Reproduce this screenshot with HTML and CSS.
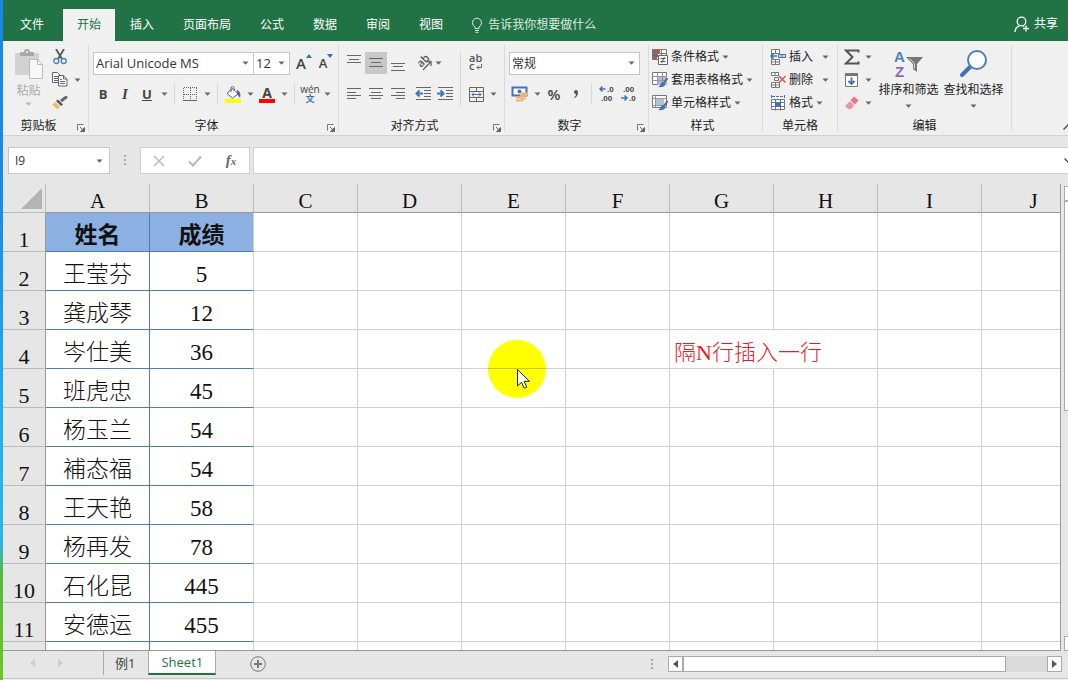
FILE: index.html
```html
<!DOCTYPE html>
<html lang="zh-CN">
<head>
<meta charset="utf-8">
<title>Sheet1</title>
<link rel="stylesheet" href="styles.css">
</head>
<body>
<svg class="defs" aria-hidden="true">
  <symbol id="caret" viewBox="0 0 7 4"><path d="M0.5 0.5h6L3.5 3.8z" fill="#666"/></symbol>
  <symbol id="launcher" viewBox="0 0 8 8"><path d="M0.5 6.5V0.5H6.5" fill="none" stroke="#777"/><path d="M3 3l3 3M7.5 3.5v4h-4z" stroke="#666" fill="#666"/></symbol>
  <symbol id="brush" viewBox="0 0 10 10"><path d="M9.5 0.5L5.8 5.8" stroke="#666" stroke-width="2"/><path d="M5.5 4.5l2 2C7 9 4 10 0 9.6 2.5 8.5 2.500 5 5.500 4.500z" fill="#3f74b5"/></symbol>
</svg>
<div class="app">
  <header class="titlebar">
    <nav class="tabs" aria-label="功能区">
      <button class="tab file">文件</button>
      <button class="tab active">开始</button>
      <button class="tab">插入</button>
      <button class="tab">页面布局</button>
      <button class="tab">公式</button>
      <button class="tab">数据</button>
      <button class="tab">审阅</button>
      <button class="tab">视图</button>
    </nav>
    <button class="tell">
      <svg width="12" height="16" viewBox="0 0 12 16" fill="none" stroke="#dcebe1"><path d="M4 11.500V10C2.500 9 1.500 7.500 1.500 5.700a4.500 4.500 0 0 1 9 0C10.500 7.500 9.500 9 8 10v1.500zM4 13.500h4M4.500 15.300h3"/></svg>
      <span>告诉我你想要做什么</span>
    </button>
    <button class="share">
      <svg width="16" height="17" viewBox="0 0 16 17" fill="none" stroke="#fff" stroke-width="1.300"><circle cx="7.500" cy="5.500" r="4.300"/><path d="M1 16c0-3.500 1.600-5.300 4.500-6.200M9 9.800l1.300.6M12 9.500v6M9 12.500h6"/></svg>
      <span>共享</span>
    </button>
  </header>

  <section class="ribbon" aria-label="开始">
    <div class="group clipboard">
      <div class="body">
        <button class="paste">
          <svg width="28" height="32" viewBox="0 0 28 32"><path d="M0 5h24v22H0z" fill="#d2d2d2"/><path d="M5 8V4h4a3 3 0 0 1 6 0h4v4z" fill="#a8a8a8"/><circle cx="12" cy="4" r="1" fill="#f0f0f0"/><path d="M14.500 11.500h8l5 5v14h-13z" fill="#f7f7f7" stroke="#bbb"/><path d="M22.500 11.500v5h5" fill="none" stroke="#bbb"/></svg>
          <span>粘贴</span>
          <svg class="caret pale"><use href="#caret"/></svg>
        </button>
        <div class="stack">
          <div class="row"><button class="ib" aria-label="剪切"><svg width="14" height="16" viewBox="0 0 14 16" fill="none"><path d="M3 0l6 10M11 0L5 10" stroke="#555" stroke-width="1.800"/><circle cx="3.300" cy="12" r="2.500" stroke="#4d7dba" stroke-width="1.300"/><circle cx="10.700" cy="12" r="2.500" stroke="#4d7dba" stroke-width="1.300"/></svg></button></div>
          <div class="row"><button class="ib" aria-label="复制"><svg width="16" height="15" viewBox="0 0 16 15" fill="#fafafa" stroke="#666"><path d="M.5.5h5l3 3v7h-8zM2 4.500h4M2 6.500h4M2 8.500h4"/><path d="M6.500 3.500h5l3.500 3.500v7H6.500z"/><path d="M11.500 3.500V7H15M8 7.500h2M8 9.500h5M8 11.500h5" fill="none" stroke="#4d6f9c"/></svg></button><button class="ar" aria-label="复制选项"><svg class="caret"><use href="#caret"/></svg></button></div>
          <div class="row"><button class="ib" aria-label="格式刷"><svg width="16" height="14" viewBox="0 0 16 14"><path d="M15 0.500L9 5" stroke="#666" stroke-width="3"/><path d="M6 3.500l5 5-2 1.500-5-5z" fill="#555"/><path d="M3.500 6L8 10.500 5.500 13.500 0 8.800z" fill="#eebb70"/></svg></button></div>
        </div>
      </div>
      <footer><span>剪贴板</span><button aria-label="剪贴板设置"><svg width="8" height="8"><use href="#launcher"/></svg></button></footer>
    </div>

    <div class="group font">
      <div class="body tools">
        <div class="row">
          <label class="combo wide"><select aria-label="字体"><option>Arial Unicode MS</option></select><svg class="caret"><use href="#caret"/></svg></label>
          <label class="combo size"><select aria-label="字号"><option>12</option></select><svg class="caret"><use href="#caret"/></svg></label>
          <button class="ib grow" aria-label="增大字号"><b>A</b><svg width="6" height="4" viewBox="0 0 6 4"><path d="M0 4h6L3 0z" fill="#3f6ea8"/></svg></button>
          <button class="ib grow small" aria-label="减小字号"><b>A</b><svg width="6" height="4" viewBox="0 0 6 4"><path d="M0 0h6L3 4z" fill="#3f6ea8"/></svg></button>
        </div>
        <div class="row">
          <button class="ib glyph"><b>B</b></button>
          <button class="ib glyph ital"><i>I</i></button>
          <button class="ib glyph"><u>U</u></button>
          <button class="ar" aria-label="下划线选项"><svg class="caret"><use href="#caret"/></svg></button>
          <span class="sep"></span>
          <button class="ib" aria-label="边框"><svg width="15" height="15" viewBox="0 0 15 15" stroke="#666"><path d="M.5 1v13M7.500 1v13M13.500 1v13M1 .5h13M1 7.500h13" stroke-dasharray="1 1"/><path d="M0 13.500h14"/></svg></button>
          <button class="ar" aria-label="边框选项"><svg class="caret"><use href="#caret"/></svg></button>
          <span class="sep"></span>
          <button class="ib" aria-label="填充颜色"><svg width="16" height="17" viewBox="0 0 16 17"><path d="M0 13h16v4H0z" fill="#ff0"/><path d="M3 6l5-3.500L13 8l-5.500 4L2.500 8z" fill="#fafafa" stroke="#666"/><path d="M6 6V2a1.500 1.500 0 0 1 3 0v3" fill="none" stroke="#666"/><path d="M12 4c3 1 4 4 3 8-1-1-2-3-3-4z" fill="#44699b"/></svg></button>
          <button class="ar" aria-label="填充颜色选项"><svg class="caret"><use href="#caret"/></svg></button>
          <button class="ib fontcolor" aria-label="字体颜色"><b>A</b></button>
          <button class="ar" aria-label="字体颜色选项"><svg class="caret"><use href="#caret"/></svg></button>
          <span class="sep"></span>
          <button class="ib wen"><span>wén</span><span class="blue">文</span></button>
          <button class="ar" aria-label="拼音选项"><svg class="caret"><use href="#caret"/></svg></button>
        </div>
      </div>
      <footer><span>字体</span><button aria-label="字体设置"><svg width="8" height="8"><use href="#launcher"/></svg></button></footer>
    </div>

    <div class="group align">
      <div class="body split">
        <div class="tools">
          <div class="row">
            <button class="ib" aria-label="顶端对齐"><svg width="14" height="18" viewBox="0 0 14 18" stroke="#666"><path d="M0 1.500h14M2 5.500h10M0 8.500h14"/></svg></button>
            <button class="ib on" aria-label="垂直居中"><svg width="14" height="16" viewBox="0 0 14 16" stroke="#666"><path d="M0 3.500h14M2 7.500h10M0 11.500h14"/></svg></button>
            <button class="ib" aria-label="底端对齐"><svg width="14" height="16" viewBox="0 0 14 16" stroke="#666"><path d="M0 8.500h14M2 11.500h10M0 15.500h14"/></svg></button>
            <button class="ib gap" aria-label="方向"><svg width="20" height="20" viewBox="0 0 20 20"><text x="0" y="0" transform="translate(8 15) rotate(-45)" class="abtext">ab</text><path d="M10 17L17.500 9M13.500 8.500h4.500v4.500" stroke="#666" fill="none" stroke-width="1.300"/></svg></button>
            <button class="ar" aria-label="方向选项"><svg class="caret"><use href="#caret"/></svg></button>
          </div>
          <div class="row">
            <button class="ib" aria-label="左对齐"><svg width="14" height="12" viewBox="0 0 14 12" stroke="#666"><path d="M0 .5h14M0 4.500h9M0 7.500h14M0 10.500h9"/></svg></button>
            <button class="ib" aria-label="居中"><svg width="14" height="12" viewBox="0 0 14 12" stroke="#666"><path d="M0 .5h14M2 4.500h10M0 7.500h14M2 10.500h10"/></svg></button>
            <button class="ib" aria-label="右对齐"><svg width="14" height="12" viewBox="0 0 14 12" stroke="#666"><path d="M0 .5h14M5 4.500h9M0 7.500h14M5 10.500h9"/></svg></button>
            <button class="ib gap" aria-label="减少缩进量"><svg width="16" height="14" viewBox="0 0 16 14" stroke="#666"><path d="M1 .5h15M9 3.500h7M9 6.500h7M9 9.500h7M1 12.500h15"/><path d="M8 6.500H2M4.500 3.500l-3 3 3 3" fill="none" stroke="#3f74b5" stroke-width="2"/></svg></button>
            <button class="ib" aria-label="增加缩进量"><svg width="16" height="14" viewBox="0 0 16 14" stroke="#666"><path d="M1 .5h15M9 3.500h7M9 6.500h7M9 9.500h7M1 12.500h15"/><path d="M0 6.500h6M3.500 3.500l3 3-3 3" fill="none" stroke="#3f74b5" stroke-width="2"/></svg></button>
          </div>
        </div>
        <span class="sep tall"></span>
        <div class="tools">
          <div class="row"><button class="ib" aria-label="自动换行"><svg width="16" height="20" viewBox="0 0 16 20"><text x="1" y="9" class="abtext">ab</text><text x="1" y="17" class="abtext">c</text><path d="M13.500 11v3.500H9M11 12.500l-2 2 2 2" fill="none" stroke="#666"/></svg></button></div>
          <div class="row"><button class="ib" aria-label="合并后居中"><svg width="15" height="15" viewBox="0 0 15 15" stroke="#666" fill="none"><path d="M.5.500h14v14H.5zM.5 4.500h14M.5 10.500h14M7.500.5v4M7.500 10.500v4"/><path d="M3 7.500h9M5 5.500l-2 2 2 2M10 5.500l2 2-2 2" stroke="#44699b"/></svg></button><button class="ar" aria-label="合并选项"><svg class="caret"><use href="#caret"/></svg></button></div>
        </div>
      </div>
      <footer><span>对齐方式</span><button aria-label="对齐设置"><svg width="8" height="8"><use href="#launcher"/></svg></button></footer>
    </div>

    <div class="group number">
      <div class="body tools">
        <div class="row"><label class="combo fmt"><select aria-label="数字格式"><option>常规</option></select><svg class="caret"><use href="#caret"/></svg></label></div>
        <div class="row">
          <button class="ib" aria-label="会计数字格式"><svg width="18" height="16" viewBox="0 0 18 16"><path d="M1.500 1.500h14v8h-14z" fill="#fff" stroke="#3f74b5" stroke-width="2"/><circle cx="8.500" cy="5.500" r="2" fill="#3f74b5"/><path d="M10 7.500h7M9 9.500h7M5 11.500h6M5 14.500h7M10 12.500h5" stroke="#efb66d" stroke-width="1.800"/></svg></button>
          <button class="ar" aria-label="会计格式选项"><svg class="caret"><use href="#caret"/></svg></button>
          <button class="ib pct">%</button>
          <button class="ib" aria-label="千位分隔"><svg width="6" height="9" viewBox="0 0 6 9"><path d="M1 2a2 2 0 0 1 4 0c0 3-1 5-3.500 6L1 7.300C2.300 6.500 3 5.500 3 4 1.700 4 1 3 1 2z" fill="#555"/></svg></button>
          <span class="sep"></span>
          <button class="ib" aria-label="增加小数位数"><svg width="18" height="20" viewBox="0 0 18 20"><text x="9" y="8" class="dec">.0</text><text x="3" y="17" class="dec">.00</text><path d="M7.500 5H2M4.500 2.500L2 5 4.500 7.500" fill="none" stroke="#3f74b5" stroke-width="1.500"/></svg></button>
          <button class="ib" aria-label="减少小数位数"><svg width="18" height="20" viewBox="0 0 18 20"><text x="3" y="8" class="dec">.00</text><text x="9" y="17" class="dec">.0</text><path d="M1 14H7M4.500 11.500L7 14 4.500 16.500" fill="none" stroke="#3f74b5" stroke-width="1.500"/></svg></button>
        </div>
      </div>
      <footer><span>数字</span><button aria-label="数字设置"><svg width="8" height="8"><use href="#launcher"/></svg></button></footer>
    </div>

    <div class="group styles">
      <div class="body list">
        <button><svg width="16" height="16" viewBox="0 0 16 16"><path d="M.5.500h14v10H.5z" fill="#fff" stroke="#777"/><path d="M1 1h7v3H1zM1 8h4v3H1z" fill="#c4513e"/><path d="M1 4h5v4H1z" fill="#3f74b5"/><path d="M9.500.5v6M.5 4.500h14" stroke="#777"/><path d="M6.500 6.500h9v9h-9z" fill="#fff" stroke="#666"/><path d="M8.500 9.500h5M8.500 12.500h5M12.500 8l-3 6" stroke="#555"/></svg><span>条件格式</span><svg class="caret"><use href="#caret"/></svg></button>
        <button><svg width="16" height="16" viewBox="0 0 16 16"><path d="M.5.500h14v12H.5z" fill="#fff" stroke="#777"/><path d="M5 4h10v9H5z" fill="#a9bedb"/><path d="M.5 4.500h14M.5 8.500h14M5.500.5v12M10.500.5v12" stroke="#9a93a8"/><use href="#brush" x="6" y="5" width="10" height="11"/></svg><span>套用表格格式</span><svg class="caret"><use href="#caret"/></svg></button>
        <button><svg width="16" height="16" viewBox="0 0 16 16"><path d="M.5.500h14v12H.5z" fill="#fff" stroke="#777"/><path d="M4 4h8v6H4z" fill="#a9c4e2"/><path d="M.5 3.500h14M3.500.5v12M.5 10.500h14" stroke="#999"/><use href="#brush" x="6" y="5" width="10" height="11"/></svg><span>单元格样式</span><svg class="caret"><use href="#caret"/></svg></button>
      </div>
      <footer><span>样式</span></footer>
    </div>

    <div class="group cells">
      <div class="body list">
        <button class="spread"><svg width="16" height="16" viewBox="0 0 16 16" fill="#fff" stroke="#777"><path d="M1.500.5h8v4h-8zM5.500.5v4M1.500 10.500h8v5h-8zM5.500 10.500v5M1.500 13h8M1.500 4.500v6"/><path d="M8.500 5.500h7v3h-7zM12 5.500v3" fill="#cfe0f3" stroke="#3f6ea8"/><path d="M7 7H1M3.500 4.500L1 7l2.500 2.500" fill="none" stroke="#3f74b5" stroke-width="1.500"/></svg><span>插入</span><svg class="caret"><use href="#caret"/></svg></button>
        <button class="spread"><svg width="16" height="16" viewBox="0 0 16 16" fill="#fff" stroke="#777"><path d="M1.500.5h7v3h-7zM5 .5v3M1.500 10.500h8v5h-8zM5.500 10.500v5M1.500 13h8M4.500 5.500h4v3h-4z"/><path d="M9 4l6.500 6.500M15.500 4L9 10.500" stroke="#dc5a4a" stroke-width="1.500"/></svg><span>删除</span><svg class="caret"><use href="#caret"/></svg></button>
        <button><svg width="16" height="16" viewBox="0 0 16 16" fill="none" stroke="#777"><path d="M1.500 4.500h13v10h-13zM1.500 7.500h13M1.500 11.500h13M5.500 4.500v11M10.500 4.500v11" fill="#fff"/><path d="M5 7h6v5H5z" fill="#3f74b5" stroke="none"/><path d="M1.500 0v3M14.500 0v3M2 1.500h12" stroke="#3f74b5" stroke-dasharray="3 1"/></svg><span>格式</span><svg class="caret"><use href="#caret"/></svg></button>
      </div>
      <footer><span>单元格</span></footer>
    </div>

    <div class="group edit">
      <div class="body">
        <div class="list">
          <button aria-label="自动求和"><svg width="16" height="16" viewBox="0 0 16 16"><path d="M14.500 3.500V1.500H2L8.500 8 2 14.500h12.500v-2" fill="none" stroke="#555" stroke-width="2"/></svg><svg class="caret far"><use href="#caret"/></svg></button>
          <button aria-label="填充"><svg width="16" height="16" viewBox="0 0 16 16"><path d="M1.500 1.500h12v13h-12z" fill="#fff" stroke="#777"/><path d="M1 1h13v3H1z" fill="#777"/><path d="M7.500 5.500v6M4.500 9l3 3 3-3" fill="none" stroke="#2f74b5" stroke-width="1.800"/></svg><svg class="caret far"><use href="#caret"/></svg></button>
          <button aria-label="清除"><svg width="16" height="16" viewBox="0 0 16 16"><path d="M10 1.500L14.500 5.500 11 9.500 6.500 5.500z" fill="#e8738a"/><path d="M5.800 6.200L10.300 10.300l-3.300 3.700H4L1 11z" fill="#ef94a5"/></svg><svg class="caret far"><use href="#caret"/></svg></button>
        </div>
        <button class="big"><svg width="30" height="31" viewBox="0 0 30 31"><text x="0" y="13" class="az a">A</text><text x="1" y="28" class="az z">Z</text><path d="M12 8h17l-6 7v8l-4-3v-5z" fill="#777"/><path d="M15.500 9.500l5 5v5" stroke="#ddd" fill="none"/></svg><span>排序和筛选</span><svg class="caret"><use href="#caret"/></svg></button>
        <button class="big"><svg width="30" height="31" viewBox="0 0 30 31"><path d="M11 18L3 26" stroke="#3f74b5" stroke-width="4" stroke-linecap="round"/><circle cx="18" cy="11" r="9" fill="#fcfdff" stroke="#4c80bb" stroke-width="2"/></svg><span>查找和选择</span><svg class="caret"><use href="#caret"/></svg></button>
      </div>
      <footer><span>编辑</span></footer>
    </div>
    <button class="collapse" aria-label="折叠功能区"><svg width="10" height="6" viewBox="0 0 10 6"><path d="M.5 5.500L5 1l4.500 4.500" fill="none" stroke="#555" stroke-width="1.500"/></svg></button>
  </section>

  <section class="formula">
    <label class="combo name"><input aria-label="名称框" value="I9"><svg class="caret"><use href="#caret"/></svg></label>
    <span class="dots"></span>
    <div class="fx">
      <button aria-label="取消"><svg width="12" height="12" viewBox="0 0 12 12"><path d="M1 1l10 10M11 1L1 11" stroke="#bbb" stroke-width="1.500"/></svg></button>
      <button aria-label="输入"><svg width="14" height="12" viewBox="0 0 14 12"><path d="M1 6.500L5 10.500 13 1.500" fill="none" stroke="#bbb" stroke-width="2.300"/></svg></button>
      <button class="fn"><i>f<small>x</small></i></button>
    </div>
    <input class="entry" aria-label="编辑栏">
    <button class="expand" aria-label="展开编辑栏"><svg width="8" height="5" viewBox="0 0 8 5"><path d="M.5.500L4 4 7.500.500" fill="none" stroke="#555" stroke-width="1.500"/></svg></button>
  </section>

  <main class="work">
    <div class="viewport">
      <table>
        <colgroup><col class="rowcol"><col span="10"></colgroup>
        <thead><tr><th class="corner" aria-label="全选"><svg width="21" height="21" viewBox="0 0 21 21"><path d="M21 0v21H0z" fill="#b4b4b4"/></svg></th><th>A</th><th>B</th><th>C</th><th>D</th><th>E</th><th>F</th><th>G</th><th>H</th><th>I</th><th>J</th></tr></thead>
        <tbody>
          <tr class="head"><th>1</th><td>姓名</td><td>成绩</td><td></td><td></td><td></td><td></td><td></td><td></td><td></td><td></td></tr>
          <tr><th>2</th><td>王莹芬</td><td>5</td><td></td><td></td><td></td><td></td><td></td><td></td><td></td><td></td></tr>
          <tr><th>3</th><td>龚成琴</td><td>12</td><td></td><td></td><td></td><td></td><td></td><td></td><td></td><td></td></tr>
          <tr><th>4</th><td>岑仕美</td><td>36</td><td></td><td></td><td></td><td></td><td class="note">隔N行插入一行</td><td></td><td></td><td></td></tr>
          <tr><th>5</th><td>班虎忠</td><td>45</td><td></td><td></td><td></td><td></td><td></td><td></td><td></td><td></td></tr>
          <tr><th>6</th><td>杨玉兰</td><td>54</td><td></td><td></td><td></td><td></td><td></td><td></td><td></td><td></td></tr>
          <tr><th>7</th><td>補态福</td><td>54</td><td></td><td></td><td></td><td></td><td></td><td></td><td></td><td></td></tr>
          <tr><th>8</th><td>王天艳</td><td>58</td><td></td><td></td><td></td><td></td><td></td><td></td><td></td><td></td></tr>
          <tr><th>9</th><td>杨再发</td><td>78</td><td></td><td></td><td></td><td></td><td></td><td></td><td></td><td></td></tr>
          <tr><th>10</th><td>石化昆</td><td>445</td><td></td><td></td><td></td><td></td><td></td><td></td><td></td><td></td></tr>
          <tr><th>11</th><td>安德运</td><td>455</td><td></td><td></td><td></td><td></td><td></td><td></td><td></td><td></td></tr>
          <tr><th></th><td></td><td></td><td></td><td></td><td></td><td></td><td></td><td></td><td></td><td></td></tr>
        </tbody>
      </table>
      <div class="pointer">
        <svg width="58" height="58" viewBox="0 0 58 58"><circle cx="29" cy="29" r="29" fill="#ff0"/><path d="M0 28.500h58" stroke="#c8c800"/><path d="M29.500 29.500v16.500l4-3.800 2.600 6 2.600-1.100-2.600-5.800h5.300z" fill="#fff" stroke="#222"/></svg>
      </div>
    </div>
    <div class="vscroll"><span class="box"></span><span class="thumb"></span><span class="box end"></span></div>
  </main>

  <footer class="bottom">
    <div class="arrows"><svg width="5" height="8" viewBox="0 0 5 8"><path d="M5 0v8L0 4z" fill="#ccc"/></svg><svg width="5" height="8" viewBox="0 0 5 8"><path d="M0 0v8l5-4z" fill="#ccc"/></svg></div>
    <button class="sheet">例1</button>
    <button class="sheet current">Sheet1</button>
    <button class="add" aria-label="新工作表"><svg width="16" height="16" viewBox="0 0 16 16" fill="none" stroke="#777"><circle cx="8" cy="8" r="7.300"/><path d="M8 4v8M4 8h8" stroke-width="2"/></svg></button>
    <span class="dots"></span>
    <div class="hscroll">
      <button aria-label="向左滚动"><svg width="5" height="8" viewBox="0 0 5 8"><path d="M5 0v8L0 4z" fill="#555"/></svg></button>
      <span class="thumb"></span>
      <button aria-label="向右滚动"><svg width="5" height="8" viewBox="0 0 5 8"><path d="M0 0v8l5-4z" fill="#555"/></svg></button>
    </div>
  </footer>
  <div class="status"></div>
</div>
</body>
</html>
```
FILE: styles.css
```css
* { box-sizing: border-box; }

body {
  margin: 0;
  height: 100vh;
  overflow: hidden;
  font: 12px/16px "Open Sans", "Noto Sans CJK SC", sans-serif;
  color: #333;
  background: linear-gradient(#1a86e6, #1c8ae8 30%, #21aef0 60%, #2bb5e8 80%, #55b848 84%, #6cc71f);
  padding-left: 3px;
}

button, input, select {
  font: inherit;
  color: inherit;
  background: none;
  border: 0;
  padding: 0;
  margin: 0;
  border-radius: 0;
}

button { display: flex; align-items: center; justify-content: center; white-space: nowrap; }
svg { display: block; flex: none; }
.defs { display: none; }
.caret { width: 7px; height: 4px; }
.pale { opacity: 0.4; }

.app { display: flex; flex-direction: column; height: 100%; background: #e6e6e6; }

/* Title bar */
.titlebar {
  display: flex;
  height: 41px;
  padding-top: 9px;
  background: #217346;
  color: #fff;
}
.tabs { display: flex; gap: 1px; }
.tab { padding: 0 14px; }
.tab.file { padding: 0 18px 0 17px; }
.tab.active { background: #f0f0f0; color: #217346; }
.tell { margin-left: 14px; gap: 5px; color: #dcebe1; }
.share { margin-left: auto; margin-right: 10px; gap: 4px; padding-bottom: 2px; }

/* Ribbon */
.ribbon {
  display: flex;
  height: 95px;
  background: #f0f0f0;
  border-bottom: 1px solid #d2d2d2;
}
.group {
  display: flex;
  flex-direction: column;
  flex: none;
  border-right: 1px solid #dadada;
  margin: 4px 0;
}
.group .body { display: flex; flex: 1; }
.group footer {
  display: grid;
  grid-template-columns: 14px 1fr 14px;
  align-items: center;
  height: 11px;
  line-height: 12px;
  color: #222;
}
.group footer span { grid-column: 2; text-align: center; }
.group footer button { align-self: end; }
.clipboard { width: 86px; }
.clipboard footer { grid-template-columns: 0 1fr 14px; }
.font { width: 250px; }
.font footer { grid-template-columns: 0 1fr 14px; }
.align { width: 166px; }
.align footer { grid-template-columns: 0 1fr 14px; }
.number { width: 144px; }
.number footer { grid-template-columns: 0 1fr 14px; }
.styles { width: 114px; }
.styles footer { grid-template-columns: 0 1fr 6px; }
.cells { width: 75px; }
.edit { width: 174px; }

.group .tools {
  display: flex;
  flex-direction: column;
  gap: 9px;
  padding: 7px 0 0 3px;
}
.number .tools, .split .tools { padding-left: 4px; }
.split .tools + .sep + .tools { padding-left: 0; }
.row { display: flex; height: 22px; align-items: center; }
.ib { width: 22px; height: 22px; flex: none; color: #444; }
.ib.on { background: #c8c8c8; }
.ib.gap { margin-left: 3px; }
.ar { width: 12px; height: 22px; flex: none; }
.ib.gap + .ar { width: 9px; margin-right: 3px; }
.sep { width: 1px; height: 22px; margin: 0 4px; background: #d8d8d8; flex: none; }
.sep.tall { height: 54px; margin-top: 7px; }

.paste { flex-direction: column; width: 46px; gap: 3px; padding-left: 5px; color: #aaa; justify-content: flex-start; padding-top: 3px; }
.stack { display: flex; flex-direction: column; }
.stack .row { height: 23px; }

.combo {
  display: grid;
  grid-template-columns: 1fr 15px;
  align-items: center;
  height: 23px;
  background: #fff;
  border: 1px solid #c6c6c6;
}
.combo select, .combo input {
  grid-area: 1 / 1 / 2 / 3;
  width: 100%;
  height: 21px;
  padding-left: 2px;
  appearance: none;
  font-size: 13px;
}
.combo .caret { grid-area: 1 / 2; justify-self: center; pointer-events: none; }
.wide { width: 161px; margin-left: 1px; }
.size { width: 37px; margin-left: -1px; }
.fmt { width: 131px; }
.combo.fmt select { font-size: 12px; padding-top: 1px; }

.grow { align-items: flex-start; font-size: 15px; margin-left: 3px; }
.grow b { font-weight: 600; line-height: 22px; }
.grow svg { margin-top: 2px; }
.grow.small { font-size: 13px; margin-left: 0; }
.glyph { font-size: 13px; }
.glyph u { font-weight: 700; }
.ital { font-family: "Liberation Serif", serif; font-size: 15px; font-weight: bold; }
.fontcolor b { width: 16px; border-bottom: 4px solid #f00; font-size: 14px; line-height: 13px; }
.wen { flex-direction: column; font-size: 10px; line-height: 9px; }
.wen span { height: 9px; }
.blue { color: #3f74b5; font-weight: bold; font-size: 9px; }
.pct { font-size: 15px; font-weight: 600; }
.abtext { font: 600 11px "Open Sans", sans-serif; fill: #555; }
.dec { font: bold 8px "Liberation Sans", sans-serif; fill: #444; }
.az { font: bold 15px/15px "Liberation Sans", sans-serif; }
.a { fill: #4b80bd; }
.z { fill: #9163b8; }

.group .list { display: flex; flex-direction: column; justify-content: flex-start; }
.list button { height: 23px; gap: 3px; justify-content: flex-start; color: #222; padding-left: 3px; }
.cells .list button { padding-left: 7px; }
.cells .list .spread .caret { margin-left: 6px; }
.edit .list button { padding-left: 6px; }
.list .far { margin-left: 2px; }
.edit .list { width: 38px; }
.big { flex-direction: column; width: 65px; color: #222; justify-content: flex-start; padding-top: 4px; }
.big span { margin: 2px 0 6px; }
.collapse { margin-left: auto; align-self: flex-end; margin-right: -5px; padding-bottom: 5px; }

/* Formula bar */
.formula { display: flex; padding: 11px 0 10px 5px; height: 48px; }
.combo.name { width: 102px; height: 27px; grid-template-columns: 1fr 20px; }
.combo.name input { padding-left: 6px; font-size: 12px; }
.dots { width: 3px; height: 11px; margin: auto 14px; background: repeating-linear-gradient(#aaa 0 2px, transparent 2px 4px); }
.formula .dots { margin-bottom: 8px; width: 2px; }
.fx {
  display: grid;
  grid-template-columns: repeat(3, 36px);
  width: 110px;
  background: #fff;
  border: 1px solid #d0d0d0;
}
.fn { font: bold 15px "Liberation Serif", serif; color: #666; }
.fn small { font-size: 11px; }
.entry { flex: 1; min-width: 0; margin-left: 3px; background: #fff; border: 1px solid #d0d0d0; border-right: 0; }
.expand { width: 4px; justify-content: flex-start; overflow: hidden; background: #fff; border: solid #d0d0d0; border-width: 1px 0; }

/* Sheet */
.work { display: flex; flex: 1; min-height: 0; }
.viewport {
  position: relative;
  flex: 1;
  overflow: hidden;
  background: #fff;
  border-right: 1px solid #999;
  border-bottom: 1px solid #999;
}
table {
  table-layout: fixed;
  width: 1083px;
  border-collapse: separate;
  border-spacing: 0;
  font: 300 23px/30px "Liberation Serif", "Noto Sans CJK SC", serif;
  color: #111;
}
col { width: 104px; }
.rowcol { width: 43px; }
th { font-size: 22px; font-weight: 400; padding: 0; }
thead th {
  height: 29px;
  font-size: 21px;
  line-height: 22px;
  padding-top: 6px;
  background: #e6e6e6;
  border-right: 1px solid #bbb;
  border-bottom: 1px solid #999;
}
thead .corner { padding: 0 3px 3px 0; border-bottom-color: #bbb; vertical-align: bottom; }
.corner svg { margin-left: auto; }
tbody th {
  height: 39px;
  padding-top: 16px;
  line-height: 22px;
  background: #e6e6e6;
  border-right: 1px solid #999;
  border-bottom: 1px solid #bbb;
}
td {
  height: 39px;
  padding: 8px 0 0;
  text-align: center;
  white-space: nowrap;
  border-right: 1px solid #d0d0d0;
  border-bottom: 1px solid #d0d0d0;
}
tbody tr td:nth-child(2) { border-right-color: #4f7cb0; border-bottom-color: #4f7cb0; }
tbody tr td:nth-child(3) { border-bottom-color: #4f7cb0; }
.head td:nth-child(-n+3) { background: #8db0e2; font-weight: bold; }
td.note { color: #e81c24; font-size: 22px; text-align: left; padding-left: 4px; border-right-color: transparent; }

.pointer { position: absolute; left: 485px; top: 156px; }

.vscroll { display: flex; flex-direction: column; width: 7px; padding: 2px 0 0 3px; }
.vscroll span { border: 1px solid #aaa; border-right: 0; background: #fff; }
.vscroll .box { height: 15px; }
.vscroll .thumb { height: 210px; }
.vscroll .end { margin-top: auto; }

/* Sheet tabs */
.bottom { display: flex; height: 28px; border-bottom: 1px solid #c4c4c4; align-items: flex-start; }
.arrows { display: flex; gap: 23px; padding: 8px 40px 0 27px; }
.sheet { height: 24px; padding: 0 13px 0 11px; border-left: 1px solid #aaa; font-size: 13px; color: #444; }
.sheet.current {
  padding: 0 12px;
  background: #fff;
  color: #217346;
  border-right: 1px solid #aaa;
  border-bottom: 2px solid #217346;
}
.add { margin: 5px 0 0 34px; }
.bottom .dots { margin: 8px 15px 0 auto; width: 2px; }
.hscroll { display: flex; width: 37%; height: 16px; margin: 5px 6px 0 0; background: #dadada; }
.hscroll button { width: 15px; background: #fff; border: 1px solid #aaa; }
.hscroll .thumb { width: 82%; background: #fff; border: 1px solid #aaa; }
.hscroll button:last-child { margin-left: auto; }
.status { height: 1px; background: #f0f0f0; }
```
